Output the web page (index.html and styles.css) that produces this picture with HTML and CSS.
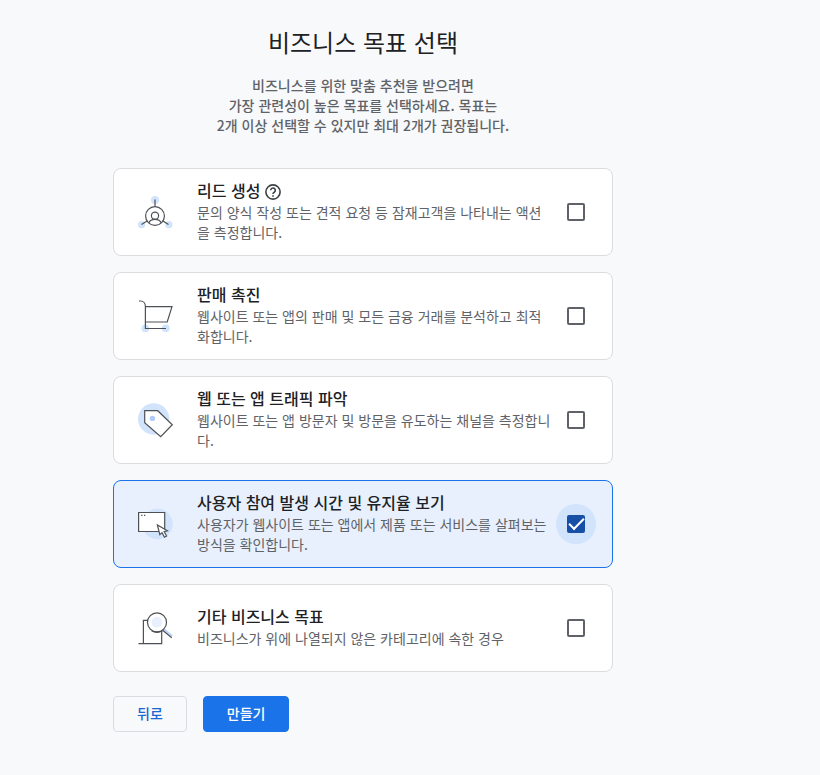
FILE: index.html
```html
<!DOCTYPE html>
<html lang="ko">
<head>
<meta charset="utf-8">
<title>비즈니스 목표 선택</title>
<link rel="stylesheet" href="styles.css">
</head>
<body>
<main class="page">
  <form class="goals">
    <h1 class="title">비즈니스 목표 선택</h1>
    <p class="intro">비즈니스를 위한 맞춤 추천을 받으려면<br>가장 관련성이 높은 목표를 선택하세요. 목표는<br>2개 이상 선택할 수 있지만 최대 2개가 권장됩니다.</p>

    <div class="cards">
      <label class="card" for="goal-leads">
        <svg class="art" viewBox="0 0 36 36" aria-hidden="true">
          <g class="tint"><circle cx="17" cy="6" r="4"/><circle cx="3.6" cy="30.7" r="3.6"/><circle cx="30.8" cy="30.7" r="3.6"/></g>
          <g class="line"><path d="M17 5.5v7M9 27l-5.5 3.5M25 27l5.5 3.5"/><circle cx="17" cy="22" r="9.4"/><circle cx="17" cy="21.8" r="3.6"/><path d="M10.8 29c1-2.6 3.2-3.7 6.2-3.7s5.2 1.1 6.2 3.7"/></g>
        </svg>
        <span class="text">
          <span class="name">리드 생성
            <svg class="help" viewBox="0 0 16 16" aria-hidden="true"><circle cx="8" cy="8" r="7.1"/><path d="M5.7 6.3a2.3 2.3 0 1 1 3.7 1.8C8.5 8.8 8 9 8 10.1"/><path d="M8 11.2v1.6"/></svg>
          </span>
          <span class="desc">문의 양식 작성 또는 견적 요청 등 잠재고객을 나타내는 액션을 측정합니다.</span>
        </span>
        <span class="tick"><input type="checkbox" id="goal-leads"></span>
      </label>

      <label class="card" for="goal-sales">
        <svg class="art" viewBox="0 0 36 36" aria-hidden="true">
          <g class="tint"><circle cx="7.4" cy="30.3" r="3.9"/><circle cx="27.8" cy="30.3" r="3.9"/></g>
          <path class="line" d="M1 3h1.5c3 0 4.9 2.5 4.9 5.7v21.8H28M7.4 8.6H34L29.2 24H7.4"/>
        </svg>
        <span class="text">
          <span class="name">판매 촉진</span>
          <span class="desc">웹사이트 또는 앱의 판매 및 모든 금융 거래를 분석하고 최적화합니다.</span>
        </span>
        <span class="tick"><input type="checkbox" id="goal-sales"></span>
      </label>

      <label class="card" for="goal-traffic">
        <svg class="art" viewBox="0 0 36 36" aria-hidden="true">
          <circle class="tint" cx="15.7" cy="17" r="15.7"/>
          <path class="line paper" d="M6.7 8.7h13l14.6 14-11.6 12-16-14z"/>
          <circle class="hole" cx="14.4" cy="16.4" r="2.7"/>
        </svg>
        <span class="text">
          <span class="name">웹 또는 앱 트래픽 파악</span>
          <span class="desc">웹사이트 또는 앱 방문자 및 방문을 유도하는 채널을 측정합니다.</span>
        </span>
        <span class="tick"><input type="checkbox" id="goal-traffic"></span>
      </label>

      <label class="card" for="goal-engagement">
        <svg class="art" viewBox="0 0 36 36" aria-hidden="true">
          <circle class="tint" cx="19.4" cy="18" r="15.3"/>
          <path class="line paper" d="M.6 6.5h26.1v19H.6z"/>
          <path class="line" d="M3.2 9.3h1.3M6 9.3h1.3"/>
          <path class="line paper" d="M19.4 19l2.4 9.6 2.2-2 2.5 4.6 2.1-1.2-2.5-4.4 3.3-.8z"/>
        </svg>
        <span class="text">
          <span class="name">사용자 참여 발생 시간 및 유지율 보기</span>
          <span class="desc">사용자가 웹사이트 또는 앱에서 제품 또는 서비스를 살펴보는 방식을 확인합니다.</span>
        </span>
        <span class="tick"><input type="checkbox" id="goal-engagement" checked></span>
      </label>

      <label class="card" for="goal-other">
        <svg class="art" viewBox="0 0 36 36" aria-hidden="true">
          <path class="line" d="M.5 33.6h23.2V20M5.4 33.6V10.3h5"/>
          <path class="handle" d="M25.8 19l8.4 7"/>
          <path class="line" d="M24.7 20.2l9 7.5"/>
          <circle class="line paper" cx="19" cy="12.4" r="9.5"/>
          <circle class="lens" cx="18.8" cy="12.2" r="5.4"/>
          <path class="line" d="M13.5 20.8q5.5 3.2 11 0"/>
        </svg>
        <span class="text">
          <span class="name">기타 비즈니스 목표</span>
          <span class="desc">비즈니스가 위에 나열되지 않은 카테고리에 속한 경우</span>
        </span>
        <span class="tick"><input type="checkbox" id="goal-other"></span>
      </label>
    </div>

    <div class="actions">
      <button class="btn" type="button">뒤로</button>
      <button class="btn primary" type="submit">만들기</button>
    </div>
  </form>
</main>
</body>
</html>
```
FILE: styles.css
```css
* { box-sizing: border-box; }

body {
  margin: 0;
  background: #f8f9fb;
  color: #202124;
  font-family: "Noto Sans CJK KR", sans-serif;
  font-size: 14px;
  line-height: 20px;
}

.page { padding: 24px 24px 40px 113px; }

.goals { max-width: 500px; }

.title {
  margin: 0 0 15px;
  font-size: 24px;
  font-weight: 400;
  line-height: 36px;
  text-align: center;
}

.intro {
  margin: 0 0 33px;
  color: #5f6368;
  font-weight: 500;
  text-align: center;
}

.cards { display: grid; gap: 16px; }

.card {
  display: flex;
  align-items: center;
  min-height: 88px;
  padding: 0 16px 0 24px;
  background: #fff;
  border: 1px solid #dadce0;
  border-radius: 8px;
  cursor: pointer;
}

.card:has(:checked) {
  background: #e8f0fe;
  border-color: #1a73e8;
}

.art { flex: none; width: 36px; height: 36px; margin-right: 23px; }
.tint { fill: #d2e3fc; }
.line { fill: none; stroke: #4d5156; stroke-width: 1.2; }
.paper { fill: #fff; }
.hole { fill: #aecbfa; }
.lens { fill: #e8f0fe; }
.handle { stroke: #bdd5fb; stroke-width: 2; }

.text { flex: 1; min-width: 0; padding: 0 4px 4px 0; }

.name {
  display: flex;
  align-items: center;
  gap: 5px;
  font-size: 16px;
  font-weight: 500;
  line-height: 24px;
}

.help {
  width: 16px;
  height: 16px;
  margin-top: 4px;
  fill: none;
  stroke: #3c4043;
  stroke-width: 1.6;
}

.desc { display: block; color: #5f6368; word-break: break-all; }

.tick {
  display: grid;
  flex: none;
  place-items: center;
  width: 40px;
  height: 40px;
  border-radius: 50%;
}

.tick:has(:checked) { background: #d2e3fc; }

.tick input {
  appearance: none;
  width: 18px;
  height: 18px;
  margin: 0;
  border: 2px solid #5f6368;
  border-radius: 2px;
}

.tick input:checked {
  display: grid;
  place-items: center;
  background: #174ea6;
  border-color: #174ea6;
}

.tick input:checked::before {
  content: "";
  width: 13px;
  height: 6px;
  margin-bottom: 5px;
  border: solid #fff;
  border-width: 0 0 2px 2px;
  transform: rotate(-45deg);
}

.actions { display: flex; gap: 16px; margin-top: 24px; }

.btn {
  height: 36px;
  padding: 0 23px 2px;
  background: transparent;
  border: 1px solid #dadce0;
  border-radius: 4px;
  color: #1967d2;
  font: 500 14px/20px "Noto Sans CJK KR", sans-serif;
}

.primary { background: #1a73e8; border-color: #1a73e8; color: #fff; }
```
